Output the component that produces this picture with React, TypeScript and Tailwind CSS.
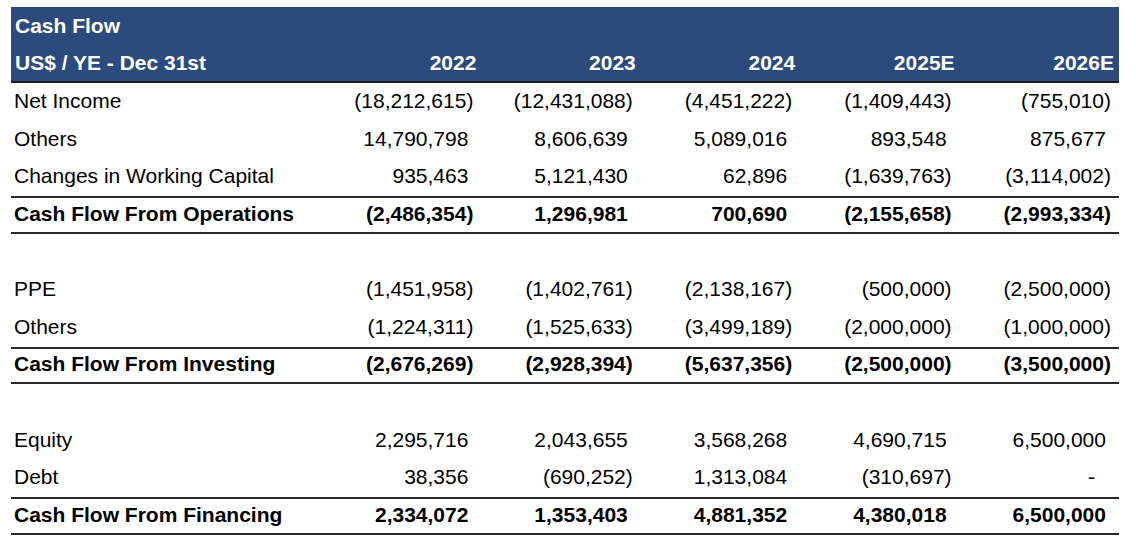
import React from 'react';

type Row = {
  label?: string;
  values?: string[];
  total?: boolean;
  blank?: boolean;
};

const years = ['2022', '2023', '2024', '2025E', '2026E'];

const rows: Row[] = [
  { label: 'Net Income', values: ['(18,212,615)', '(12,431,088)', '(4,451,222)', '(1,409,443)', '(755,010)'] },
  { label: 'Others', values: ['14,790,798', '8,606,639', '5,089,016', '893,548', '875,677'] },
  { label: 'Changes in Working Capital', values: ['935,463', '5,121,430', '62,896', '(1,639,763)', '(3,114,002)'] },
  { label: 'Cash Flow From Operations', values: ['(2,486,354)', '1,296,981', '700,690', '(2,155,658)', '(2,993,334)'], total: true },
  { blank: true },
  { label: 'PPE', values: ['(1,451,958)', '(1,402,761)', '(2,138,167)', '(500,000)', '(2,500,000)'] },
  { label: 'Others', values: ['(1,224,311)', '(1,525,633)', '(3,499,189)', '(2,000,000)', '(1,000,000)'] },
  { label: 'Cash Flow From Investing', values: ['(2,676,269)', '(2,928,394)', '(5,637,356)', '(2,500,000)', '(3,500,000)'], total: true },
  { blank: true },
  { label: 'Equity', values: ['2,295,716', '2,043,655', '3,568,268', '4,690,715', '6,500,000'] },
  { label: 'Debt', values: ['38,356', '(690,252)', '1,313,084', '(310,697)', '-'] },
  { label: 'Cash Flow From Financing', values: ['2,334,072', '1,353,403', '4,881,352', '4,380,018', '6,500,000'], total: true },
];

// accounting format: positives leave room for the closing paren
const Cell = ({ v }: { v: string }) => {
  const neg = v.startsWith('(');
  const dash = v === '-';
  return (
    <div className={`flex items-center justify-end pb-[3px] ${neg ? 'pr-[8px]' : dash ? 'pr-[24px]' : 'pr-[13px]'}`}>
      {v}
    </div>
  );
};

const App = () => {
  return (
    <div className="w-[1136px] h-[554px] bg-white pt-[7px] pl-[11px]" style={{ fontFamily: '"Liberation Sans", Arial, sans-serif' }}>
      <div className="w-[1108px] text-[21px] leading-none text-black">
        <div className="bg-[#2d4a7c] text-white font-bold border-b-2 border-[#1c1c1c]">
          <div className="h-[37.6px] flex items-center px-1">Cash Flow</div>
          <div className="h-[36.6px] grid grid-cols-[311px_repeat(5,1fr)]">
            <div className="flex items-center px-1">US$ / YE - Dec 31st</div>
            {years.map(y => (
              <div key={y} className="flex items-center justify-end pr-[5px]">{y}</div>
            ))}
          </div>
        </div>

        {rows.map((r, i) =>
          r.blank ? (
            <div key={i} className="h-[37.65px]" />
          ) : (
            <div
              key={i}
              className={`h-[37.65px] grid grid-cols-[311px_repeat(5,1fr)] ${
                r.total ? 'font-bold border-y-2 border-[#2a2a2a]' : ''
              }`}
            >
              <div className="flex items-center pl-[3px] pb-[3px]">{r.label}</div>
              {r.values!.map((v, j) => (
                <Cell key={j} v={v} />
              ))}
            </div>
          )
        )}
      </div>
    </div>
  );
};

export default App;
